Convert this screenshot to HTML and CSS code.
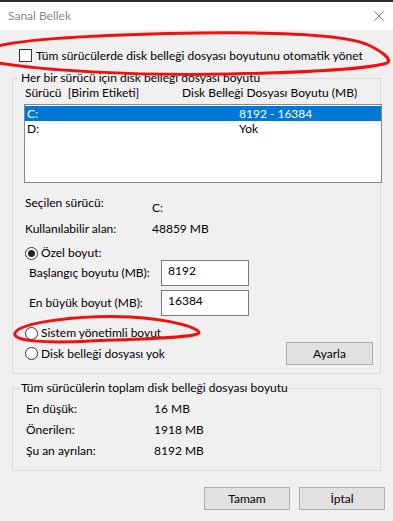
FILE: index.html
```html
<!DOCTYPE html>
<html lang="tr">
<head>
  <meta charset="UTF-8" />
  <meta name="viewport" content="width=device-width, initial-scale=1.0" />
  <title>Sanal Bellek</title>
  <link rel="stylesheet" href="styles.css">
</head>
<body>

<div class="top-strip"></div>
<header class="titlebar">
  <span class="title">Sanal Bellek</span>
  <svg class="close" width="10" height="10" viewBox="0 0 10 10">
    <path d="M0.5 0.5 L9.5 9.5 M9.5 0.5 L0.5 9.5" />
  </svg>
</header>

<main class="dialog">
  <div class="check-row">
    <span class="checkbox"></span>
    <span>Tüm sürücülerde disk belleği dosyası boyutunu otomatik yönet</span>
  </div>

  <fieldset class="group group-drives">
    <legend>Her bir sürücü için disk belleği dosyası boyutu</legend>
    <div class="cols">
      <span class="col-drive">Sürücü&nbsp; [Birim Etiketi]</span>
      <span>Disk Belleği Dosyası Boyutu (MB)</span>
    </div>
    <ul class="drive-list">
      <li class="selected"><span class="drive-name">C:</span><span>8192 - 16384</span></li>
      <li><span class="drive-name">D:</span><span>Yok</span></li>
    </ul>

    <div class="info-row">
      <span class="info-label">Seçilen sürücü:</span>
      <span class="info-drive">C:</span>
    </div>
    <div class="info-row">
      <span class="info-label">Kullanılabilir alan:</span>
      <span>48859 MB</span>
    </div>

    <div class="radio-row radio-custom">
      <span class="radio checked"></span>
      <span>Özel boyut:</span>
    </div>
    <div class="size-row">
      <span class="size-label">Başlangıç boyutu (MB):</span>
      <span class="size-input">8192</span>
    </div>
    <div class="size-row">
      <span class="size-label">En büyük boyut (MB):</span>
      <span class="size-input">16384</span>
    </div>

    <div class="radio-row radio-system">
      <span class="radio"></span>
      <span>Sistem yönetimli boyut</span>
    </div>
    <div class="none-row">
      <div class="radio-row">
        <span class="radio"></span>
        <span>Disk belleği dosyası yok</span>
      </div>
      <button class="btn">Ayarla</button>
    </div>
  </fieldset>

  <fieldset class="group group-total">
    <legend>Tüm sürücülerin toplam disk belleği dosyası boyutu</legend>
    <div class="total-row">
      <span class="total-label">En düşük:</span>
      <span>16 MB</span>
    </div>
    <div class="total-row">
      <span class="total-label">Önerilen:</span>
      <span>1918 MB</span>
    </div>
    <div class="total-row">
      <span class="total-label">Şu an ayrılan:</span>
      <span>8192 MB</span>
    </div>
  </fieldset>

  <div class="actions">
    <button class="btn">Tamam</button>
    <button class="btn">İptal</button>
  </div>
</main>

<!-- red marker circles drawn over the screenshot -->
<svg class="marks" width="393" height="521" viewBox="0 0 393 521">
  <path d="M-2 46 C 30 38 120 34 200 33 C 290 32 345 36 366 44 C 382 51 393 60 387 63 C 372 68 320 72 230 74 C 130 76 40 70 -2 63" />
  <path d="M15 333 C 20 322 80 315 130 317 C 170 319 200 328 199 333 C 195 338 140 339 90 341 C 50 343 12 342 15 333 Z" />
</svg>

</body>
</html>
```

FILE: styles.css
```css
body {
  margin: 0;
  width: 393px;
  height: 521px;
  overflow: hidden;
  position: relative;
  background-color: #f0f0f0;
  font-family: Lato, "Liberation Sans", sans-serif;
  font-size: 12px;
  line-height: 14px;
  color: #000;
}
.top-strip {
  height: 2px;
  background-color: #2e2e2e;
}
.titlebar {
  height: 28px;
  background-color: #fff;
  display: flex;
  align-items: center;
  justify-content: space-between;
  padding: 0 9px 0 8px;
}
.title {color: #8a8a8a;}
.close {margin-top: -1px;}
.close path {
  stroke: #777;
  stroke-width: 1;
  fill: none;
}

.dialog {display: flex; flex-direction: column;}

.check-row {
  display: flex;
  align-items: center;
  height: 13px;
  margin: 19px 0 0 19px;
}
.checkbox {
  width: 13px;
  height: 13px;
  box-sizing: border-box;
  border: 1px solid #333;
  background-color: #fff;
  margin-right: 4px;
}

.group {
  margin: 9px 12px 0 12px;
  padding: 0;
  border: 1px solid #dcdcdc;
  min-width: 0;
}
.group legend {
  margin-left: 7px;
  padding: 0 1px;
  line-height: 14px;
}

.cols {
  display: flex;
  margin: 1px 0 0 12px;
}
.col-drive {width: 157px;}

.drive-list {
  list-style: none;
  margin: 4px 0 0 11px;
  padding: 1px 0;
  width: 358px;
  height: 79px;
  box-sizing: border-box;
  border: 1px solid #828790;
  background-color: #fff;
}
.drive-list li {
  display: flex;
  height: 15px;
  line-height: 15px;
  padding-left: 2px;
}
.drive-list li.selected {
  background-color: #0078d7;
  color: #fff;
}
.drive-name {width: 212px;}

.info-row {
  display: flex;
  margin: 13px 0 0 12px;
}
.info-row + .info-row {margin-top: 7px;}
.info-label {width: 127px;}
.info-drive {padding-top: 5px;}

.radio-row {
  display: flex;
  align-items: center;
  margin-left: 12px;
}
.radio-custom {margin-top: 10px;}
.radio-system {margin-top: 10px;}
.radio {
  width: 13px;
  height: 13px;
  box-sizing: border-box;
  border: 1px solid #333;
  border-radius: 50%;
  background-color: #fff;
  margin-right: 3px;
  display: flex;
  align-items: center;
  justify-content: center;
}
.radio.checked::after {
  content: "";
  width: 7px;
  height: 7px;
  border-radius: 50%;
  background-color: #222;
}

.size-row {
  display: flex;
  align-items: center;
  margin-left: 16px;
}
.size-row + .size-row {margin-top: 4px;}
.size-label {width: 132px;}
.size-input {
  width: 88px;
  height: 26px;
  box-sizing: border-box;
  border: 1px solid #7a7a7a;
  background-color: #fff;
  padding: 3px 6px;
}

.none-row {
  display: flex;
  align-items: center;
  justify-content: space-between;
  margin: 2px 7px 8px 0;
}

.btn {
  width: 87px;
  height: 23px;
  padding: 0;
  border: 1px solid #adadad;
  background-color: #e1e1e1;
  font-family: inherit;
  font-size: 12px;
  color: #000;
}

.group-total {margin-top: 7px;}
.total-row {
  display: flex;
  margin: 7px 0 0 13px;
}
.group-total .total-row:last-child {margin-bottom: 12px;}
.total-label {width: 128px;}

.actions {
  display: flex;
  justify-content: flex-end;
  gap: 9px;
  margin-top: 16px;
  padding-right: 8px;
}
.actions .btn {width: 86px;}

.marks {
  position: absolute;
  top: 0;
  left: 0;
  pointer-events: none;
}
.marks path {
  fill: none;
  stroke: #f01010;
  stroke-width: 3;
  stroke-linecap: round;
}
```
